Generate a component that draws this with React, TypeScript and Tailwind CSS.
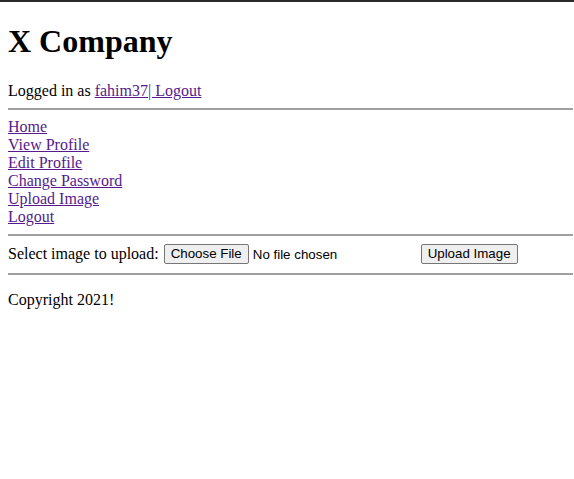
export default function App() {
  const navLinks = ["Home", "View Profile", "Edit Profile", "Change Password", "Upload Image", "Logout"];

  return (
    <div className="min-h-screen border-t-2 border-[#2b2b2b] bg-white px-2 text-black font-['Liberation_Serif',serif] text-base leading-[normal]">
      <h1 className="mt-[21.44px] mb-[21.44px] text-[32px] font-bold leading-[normal]">X Company</h1>

      <div>
        Logged in as{" "}
        <a href="#" className="text-[#551a8b] underline">
          fahim37
        </a>
        <a href="#" className="text-[#551a8b] underline">
          | Logout
        </a>
      </div>

      <div className="my-2 -mr-[7px] border-t-2 border-[#a0a0a0]" />

      {/* nav */}
      <div className="flex flex-col items-start">
        {navLinks.map((link) => (
          <a key={link} href="#" className="text-[#551a8b] underline">
            {link}
          </a>
        ))}
      </div>

      <div className="my-2 -mr-[7px] border-t-2 border-[#a0a0a0]" />

      <form className="flex h-[21px] items-center" onSubmit={(e) => e.preventDefault()}>
        <span>Select image to upload:</span>
        <span className="ml-[5px] inline-flex w-[253px] items-center font-['Liberation_Sans',Arial,sans-serif] text-[13.333px]">
          <span className="rounded-[2px] border border-[#767676] bg-[#efefef] px-[6px] py-[1px] leading-[16px]">
            Choose File
          </span>
          <span className="ml-[4px]">No file chosen</span>
        </span>
        <span className="ml-[4px] rounded-[2px] border border-[#767676] bg-[#efefef] px-[6px] py-[1px] font-['Liberation_Sans',Arial,sans-serif] text-[13.333px] leading-[16px]">
          Upload Image
        </span>
      </form>

      <div className="my-2 -mr-[7px] border-t-2 border-[#a0a0a0]" />

      <p className="mt-4">Copyright 2021!</p>
    </div>
  );
}
